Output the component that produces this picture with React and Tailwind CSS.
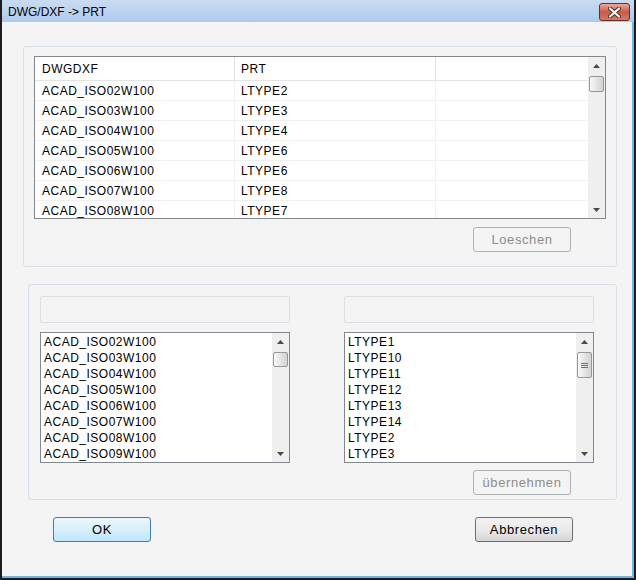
import React from "react";

const leftItems = [
  "ACAD_ISO02W100",
  "ACAD_ISO03W100",
  "ACAD_ISO04W100",
  "ACAD_ISO05W100",
  "ACAD_ISO06W100",
  "ACAD_ISO07W100",
  "ACAD_ISO08W100",
  "ACAD_ISO09W100",
];

const rightItems = [
  "LTYPE1",
  "LTYPE10",
  "LTYPE11",
  "LTYPE12",
  "LTYPE13",
  "LTYPE14",
  "LTYPE2",
  "LTYPE3",
];

const mapping = [
  ["ACAD_ISO02W100", "LTYPE2"],
  ["ACAD_ISO03W100", "LTYPE3"],
  ["ACAD_ISO04W100", "LTYPE4"],
  ["ACAD_ISO05W100", "LTYPE6"],
  ["ACAD_ISO06W100", "LTYPE6"],
  ["ACAD_ISO07W100", "LTYPE8"],
  ["ACAD_ISO08W100", "LTYPE7"],
];

function Arrow({ down }) {
  return (
    <svg width="7" height="4" viewBox="0 0 7 4">
      {down ? (
        <path d="M0 0h7L3.5 4z" fill="#4a4a4a" />
      ) : (
        <path d="M0 4h7L3.5 0z" fill="#4a4a4a" />
      )}
    </svg>
  );
}

function ScrollBar({ thumbHeight, grip }) {
  return (
    <div className="flex h-full w-[17px] shrink-0 flex-col bg-[#efefef] px-px">
      <div className="flex h-[17px] shrink-0 items-center justify-center">
        <Arrow />
      </div>
      <div className="flex-1">
        <div
          className={`mt-[2px] flex w-[15px] flex-col items-center justify-center gap-px rounded-[2px] border border-[#979797] bg-linear-to-r from-[#f8f8f8] to-[#d2d2d2] ${thumbHeight}`}
        >
          {grip &&
            [0, 1, 2].map((i) => (
              <div key={i} className="h-px w-[7px] bg-[#6e6e6e]" />
            ))}
        </div>
      </div>
      <div className="flex h-[17px] shrink-0 items-center justify-center">
        <Arrow down />
      </div>
    </div>
  );
}

function Button({ label, kind, className }) {
  const styles = {
    disabled: "border-[#adb2b5] bg-[#f4f4f4] text-[#8c8c8c]",
    normal:
      "border-[#707070] bg-linear-to-b from-[#f2f2f2] via-[#ebebeb] to-[#d5d5d5] text-black",
    default:
      "border-[#3c7fb1] bg-linear-to-b from-[#eaf6fd] via-[#d9effc] to-[#bee6fd] text-black",
  };
  return (
    <div
      className={`flex h-[25px] items-center justify-center rounded-[3px] border text-[13px] tracking-[0.6px] ${styles[kind]} ${className}`}
    >
      {label}
    </div>
  );
}

function ListBox({ items, thumbHeight, grip }) {
  return (
    <div className="flex h-[131px] w-[250px] overflow-hidden border border-[#828790] bg-white">
      <div className="flex-1 overflow-hidden pl-[3px] pt-px">
        {items.map((item) => (
          <div
            key={item}
            className="h-[16px] text-[12px] leading-[16px] tracking-[0.5px] text-black"
          >
            {item}
          </div>
        ))}
      </div>
      <ScrollBar thumbHeight={thumbHeight} grip={grip} />
    </div>
  );
}

function CloseButton() {
  return (
    <div className="flex h-[18px] w-[31px] items-center justify-center rounded-[3px] border border-[#6d2b26] bg-linear-to-b from-[#e9a99b] via-[#c75a48] to-[#d57a68]">
      <svg width="13" height="11" viewBox="0 0 13 11">
        <path d="M2 1.5l9 8M11 1.5l-9 8" stroke="#4a2a28" strokeWidth="4" strokeLinecap="round" />
        <path d="M2 1.5l9 8M11 1.5l-9 8" stroke="#ffffff" strokeWidth="2.2" strokeLinecap="round" />
      </svg>
    </div>
  );
}

export default function App() {
  return (
    <div
      className="flex h-[580px] w-[636px] flex-col border-x-2 border-b-2 border-[#1c1c1c] bg-[#f4f4f4] text-black"
      style={{ fontFamily: '"Liberation Sans", Arial, sans-serif' }}
    >
      {/* title bar */}
      <div className="flex h-[22px] shrink-0 items-center justify-between bg-linear-to-b from-[#c9dbf1] to-[#aecbec] pl-[6px] pr-[4px]">
        <span className="pt-px text-[12px]">DWG/DXF -&gt; PRT</span>
        <div className="mt-[3px] self-start">
          <CloseButton />
        </div>
      </div>

      <div className="flex flex-1 flex-col border-r-2 border-b-2 border-[#78b2de] pl-[21px]">
        {/* top group */}
        <div className="mt-[24px] flex h-[221px] w-[594px] flex-col rounded-[3px] border border-[#d7e0e8] pl-[10px] pt-[9px]">
          <div className="flex h-[163px] w-[572px] overflow-hidden border border-[#828790] bg-white">
            <div className="flex flex-1 flex-col overflow-hidden text-[12px] tracking-[0.5px]">
              <div className="flex h-[24px] shrink-0 border-b border-[#e3e3e3]">
                <div className="flex w-[200px] items-center border-r border-[#e3e3e3] pl-[7px]">
                  DWGDXF
                </div>
                <div className="flex w-[201px] items-center border-r border-[#e3e3e3] pl-[6px]">
                  PRT
                </div>
                <div className="flex-1" />
              </div>
              {mapping.map(([a, b]) => (
                <div
                  key={a}
                  className="flex h-[20px] shrink-0 border-b border-[#f0f0f0]"
                >
                  <div className="flex w-[200px] items-center border-r border-[#f0f0f0] pl-[7px]">
                    {a}
                  </div>
                  <div className="flex w-[201px] items-center border-r border-[#f0f0f0] pl-[6px]">
                    {b}
                  </div>
                  <div className="flex-1" />
                </div>
              ))}
            </div>
            <ScrollBar thumbHeight="h-[16px]" />
          </div>
          <Button label="Loeschen" kind="disabled" className="ml-[439px] mt-[8px] w-[98px]" />
        </div>

        {/* bottom group */}
        <div className="ml-[5px] mt-[17px] flex h-[216px] w-[589px] flex-col rounded-[3px] border border-[#d7e0e8] pl-[11px] pt-[11px]">
          <div className="flex gap-[54px]">
            <div className="flex flex-col gap-[9px]">
              <div className="h-[27px] w-[250px] rounded-[2px] border border-[#dcdfe5] bg-[#f4f4f4]" />
              <ListBox items={leftItems} thumbHeight="h-[15px]" />
            </div>
            <div className="flex flex-col gap-[9px]">
              <div className="h-[27px] w-[250px] rounded-[2px] border border-[#dcdfe5] bg-[#f4f4f4]" />
              <ListBox items={rightItems} thumbHeight="h-[26px]" grip />
              <Button label="übernehmen" kind="disabled" className="-mt-[2px] ml-[129px] w-[98px]" />
            </div>
          </div>
        </div>

        {/* dialog buttons */}
        <div className="mt-[17px] flex w-[550px] justify-between pl-[30px]">
          <Button label="OK" kind="default" className="w-[98px]" />
          <Button label="Abbrechen" kind="normal" className="w-[98px]" />
        </div>
      </div>
    </div>
  );
}
